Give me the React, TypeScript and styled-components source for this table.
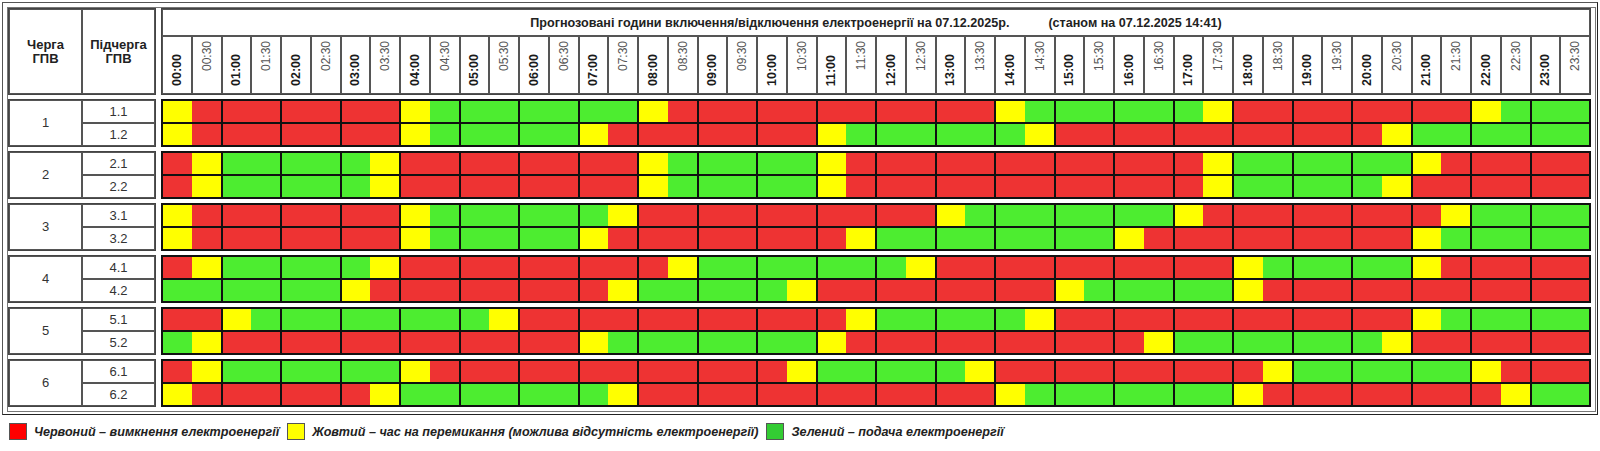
import React from 'react';
import styled, { createGlobalStyle } from 'styled-components';

const GlobalStyle = createGlobalStyle`
  html, body { margin: 0; padding: 0; background: #fff; }
  body { font-family: "Liberation Sans", Arial, sans-serif; color: #222; }
`;

type Slot = 'R' | 'Y' | 'G';

const groups: { id: string; subs: { id: string; data: string }[] }[] = [
  {
    id: '1',
    subs: [
      { id: '1.1', data: 'YR RR RR RR YG GG GG GG YR RR RR RR RR RR YG GG GG GY RR RR RR RR YG GG' },
      { id: '1.2', data: 'YR RR RR RR YG GG GG YR RR RR RR YG GG GG GY RR RR RR RR RR RY GG GG GG' },
    ],
  },
  {
    id: '2',
    subs: [
      { id: '2.1', data: 'RY GG GG GY RR RR RR RR YG GG GG YR RR RR RR RR RR RY GG GG GG YR RR RR' },
      { id: '2.2', data: 'RY GG GG GY RR RR RR RR YG GG GG YR RR RR RR RR RR RY GG GG GY RR RR RR' },
    ],
  },
  {
    id: '3',
    subs: [
      { id: '3.1', data: 'YR RR RR RR YG GG GG GY RR RR RR RR RR YG GG GG GG YR RR RR RR RY GG GG' },
      { id: '3.2', data: 'YR RR RR RR YG GG GG YR RR RR RR RY GG GG GG GG YR RR RR RR RR YG GG GG' },
    ],
  },
  {
    id: '4',
    subs: [
      { id: '4.1', data: 'RY GG GG GY RR RR RR RR RY GG GG GG GY RR RR RR RR RR YG GG GG YR RR RR' },
      { id: '4.2', data: 'GG GG GG YR RR RR RR RY GG GG GY RR RR RR RR YG GG GG YR RR RR RR RR RR' },
    ],
  },
  {
    id: '5',
    subs: [
      { id: '5.1', data: 'RR YG GG GG GG GY RR RR RR RR RR RY GG GG GY RR RR RR RR RR RR YG GG GG' },
      { id: '5.2', data: 'GY RR RR RR RR RR RR YG GG GG GG YR RR RR RR RR RY GG GG GG GY RR RR RR' },
    ],
  },
  {
    id: '6',
    subs: [
      { id: '6.1', data: 'RY GG GG GG YR RR RR RR RR RR RY GG GG GY RR RR RR RR RY GG GG GG YR RR' },
      { id: '6.2', data: 'YR RR RR RY GG GG GG GY RR RR RR RR RR RR YG GG GG GG YR RR RR RR RY GG' },
    ],
  },
];

const slotColor: Record<Slot, string> = {
  R: '#ee3333',
  Y: '#ffff00',
  G: '#4ded30',
};

const Page = styled.div`
  width: 1600px;
  height: 451px;
  overflow: hidden;
`;

const Frame = styled.div`
  box-sizing: border-box;
  width: 1596px;
  margin: 2px 0 0 2px;
  border: 1px solid #555;
  border-right-color: #222;
  border-bottom-color: #222;
  padding: 4px 1px 2px 4px;
`;

const Inner = styled.div`
  border: 1px solid #777;
  padding: 0 4px 4px 0;
  display: grid;
  grid-template-columns: 148px 1430px;
  grid-template-rows: 87px repeat(6, 48px);
  column-gap: 5px;
  row-gap: 4px;
`;

const LeftBox = styled.div<{ $header?: boolean }>`
  box-sizing: border-box;
  border: 1px solid #444;
  display: grid;
  grid-template-columns: 1fr 1fr;
  grid-template-rows: ${(p) => (p.$header ? '1fr' : '1fr 1fr')};
`;

const LeftCell = styled.div<{ $span?: boolean; $bold?: boolean }>`
  border: 1px solid #555;
  display: flex;
  align-items: center;
  justify-content: center;
  text-align: center;
  grid-row: ${(p) => (p.$span ? 'span 2' : 'auto')};
  font-size: 13px;
  line-height: 14px;
  font-weight: ${(p) => (p.$bold ? 700 : 400)};
  color: ${(p) => (p.$bold ? '#222' : '#333')};
`;

const TimeHeader = styled.div`
  box-sizing: border-box;
  border: 1px solid #444;
  display: grid;
  grid-template-rows: 27px 1fr;
  grid-template-columns: repeat(48, 1fr);
`;

const TitleCell = styled.div`
  grid-column: 1 / -1;
  border: 1px solid #555;
  display: flex;
  align-items: center;
  justify-content: center;
  font-size: 12.6px;
  font-weight: 700;
  color: #222;
  white-space: nowrap;
`;

const Stamp = styled.span`
  margin-left: 39px;
`;

const LabelCell = styled.div<{ $full: boolean }>`
  border: 1px solid #555;
  display: flex;
  flex-direction: column;
  align-items: center;
  justify-content: ${(p) => (p.$full ? 'flex-end' : 'flex-start')};
  padding: ${(p) => (p.$full ? '0 0 7px 0' : '4px 0 0 0')};
`;

const LabelText = styled.span<{ $full: boolean }>`
  writing-mode: vertical-rl;
  transform: rotate(180deg);
  font-size: ${(p) => (p.$full ? '12.5px' : '12px')};
  font-weight: ${(p) => (p.$full ? 700 : 400)};
  color: ${(p) => (p.$full ? '#1a1a1a' : '#555')};
  line-height: 1;
  white-space: nowrap;
`;

const Grid = styled.div`
  box-sizing: border-box;
  border: 1px solid #111;
  display: grid;
  grid-template-columns: repeat(24, 1fr);
  grid-template-rows: 1fr 1fr;
`;

const HourCell = styled.div`
  border: 1px solid #111;
  display: flex;
`;

const Half = styled.div<{ $c: Slot }>`
  flex: 1;
  background: ${(p) => slotColor[p.$c]};
`;

const Legend = styled.div`
  display: flex;
  align-items: center;
  margin: 8px 0 0 9px;
  height: 17px;
`;

const Swatch = styled.span<{ $color: string }>`
  box-sizing: border-box;
  width: 18px;
  height: 17px;
  background: ${(p) => p.$color};
  border: 1px solid #555;
  margin-right: 7px;
`;

const LegendText = styled.span`
  font-size: 12.6px;
  font-weight: 700;
  font-style: italic;
  color: #222;
  margin-right: 8px;
  white-space: nowrap;
`;

const pad = (n: number) => (n < 10 ? `0${n}` : `${n}`);

export default function App() {
  const labels = Array.from({ length: 48 }, (_, i) => ({
    text: `${pad(Math.floor(i / 2))}:${i % 2 ? '30' : '00'}`,
    full: i % 2 === 0,
  }));

  return (
    <Page>
      <GlobalStyle />
      <Frame>
        <Inner>
          <LeftBox $header>
            <LeftCell $bold>
              Черга
              <br />
              ГПВ
            </LeftCell>
            <LeftCell $bold>
              Підчерга
              <br />
              ГПВ
            </LeftCell>
          </LeftBox>
          <TimeHeader>
            <TitleCell>
              <span>Прогнозовані години включення/відключення електроенергії на 07.12.2025р.</span>
              <Stamp>(станом на 07.12.2025 14:41)</Stamp>
            </TitleCell>
            {labels.map((l) => (
              <LabelCell key={l.text} $full={l.full}>
                <LabelText $full={l.full}>{l.text}</LabelText>
              </LabelCell>
            ))}
          </TimeHeader>
          {groups.map((g) => (
            <React.Fragment key={g.id}>
              <LeftBox>
                <LeftCell $span>{g.id}</LeftCell>
                <LeftCell>{g.subs[0].id}</LeftCell>
                <LeftCell>{g.subs[1].id}</LeftCell>
              </LeftBox>
              <Grid>
                {g.subs.map((s) =>
                  s.data.split(' ').map((h, hi) => (
                    <HourCell key={`${s.id}-${hi}`}>
                      <Half $c={h[0] as Slot} />
                      <Half $c={h[1] as Slot} />
                    </HourCell>
                  ))
                )}
              </Grid>
            </React.Fragment>
          ))}
        </Inner>
      </Frame>
      <Legend>
        <Swatch $color="#ff0000" />
        <LegendText>Червоний – вимкнення електроенергії</LegendText>
        <Swatch $color="#ffff00" />
        <LegendText>Жовтий – час на перемикання (можлива відсутність електроенергії)</LegendText>
        <Swatch $color="#33cc33" />
        <LegendText>Зелений – подача електроенергії</LegendText>
      </Legend>
    </Page>
  );
}
